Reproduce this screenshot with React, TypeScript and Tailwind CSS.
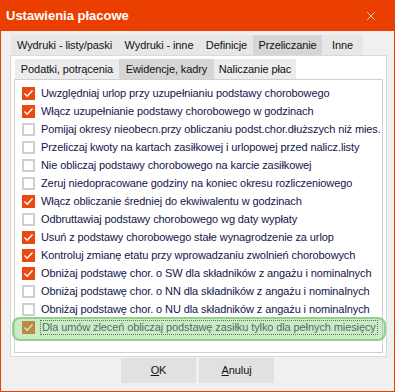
import { X } from "lucide-react"

const options = [
  { label: "Uwzględniaj urlop przy uzupełnianiu podstawy chorobowego", checked: true },
  { label: "Włącz uzupełnianie podstawy chorobowego w godzinach", checked: true },
  { label: "Pomijaj okresy nieobecn.przy obliczaniu podst.chor.dłuższych niż mies.", checked: false },
  { label: "Przeliczaj kwoty na kartach zasiłkowej i urlopowej przed nalicz.listy", checked: false },
  { label: "Nie obliczaj podstawy chorobowego na karcie zasiłkowej", checked: false },
  { label: "Zeruj niedopracowane godziny na koniec okresu rozliczeniowego", checked: false },
  { label: "Włącz obliczanie średniej do ekwiwalentu w godzinach", checked: true },
  { label: "Odbruttawiaj podstawy chorobowego wg daty wypłaty", checked: false },
  { label: "Usuń z podstawy chorobowego stałe wynagrodzenie za urlop", checked: true },
  { label: "Kontroluj zmianę etatu przy wprowadzaniu zwolnień chorobowych", checked: true },
  { label: "Obniżaj podstawę chor. o SW dla składników z angażu i nominalnych", checked: true },
  { label: "Obniżaj podstawę chor. o NN dla składników z angażu i nominalnych", checked: false },
  { label: "Obniżaj podstawę chor. o NU dla składników z angażu i nominalnych", checked: false },
]

const outerTabs = [
  { label: "Wydruki - listy/paski", w: "w-[107px]" },
  { label: "Wydruki - inne", w: "w-[82px]" },
  { label: "Definicje", w: "w-[53px]" },
  { label: "Przeliczanie", w: "w-[69px]", active: true },
  { label: "Inne", w: "w-[41px]" },
]

const innerTabs = [
  { label: "Podatki, potrącenia", w: "w-[104px]" },
  { label: "Ewidencje, kadry", w: "w-[95px]", active: true },
  { label: "Naliczanie płac", w: "w-[82px]" },
]

function CheckBox({ checked }: { checked: boolean }) {
  if (checked) {
    return (
      <span className="flex h-[13px] w-[13px] shrink-0 items-center justify-center bg-[#ea4a12]">
        <svg width="13" height="13" viewBox="0 0 13 13">
          <polyline points="2.5,6.5 5.2,9.2 10.5,3.5" fill="none" stroke="#ffffff" strokeWidth="1.4" />
        </svg>
      </span>
    )
  }
  return <span className="h-[13px] w-[13px] shrink-0 border-2 border-[#cfcfcf] bg-white" />
}

export default function App() {
  return (
    <div
      className="flex h-[392px] w-[395px] flex-col bg-[#f0f0f0] text-[11px] tracking-[-0.1px]"
      style={{ fontFamily: '"Liberation Sans", Arial, sans-serif' }}
    >
      {/* Title bar */}
      <div className="flex h-[31px] shrink-0 items-center justify-between bg-[#ea3f00] pl-[6px] pr-[17px]">
        <span className="text-[13px] font-bold tracking-normal text-white">Ustawienia płacowe</span>
        <X size={14} strokeWidth={1.2} className="text-white" />
      </div>

      <div className="flex flex-1 flex-col border-x border-b border-[#ea3f00] pl-[9px] pr-[7px]">
        {/* Outer tabs */}
        <div className="mt-[4px] flex h-[20px] pl-[1px]">
          {outerTabs.map((t) => (
            <div
              key={t.label}
              className={`${t.w} flex items-center justify-center whitespace-nowrap text-[#111] ${t.active ? "bg-[#d6d6d6]" : "bg-[#e7e7e7]"}`}
            >
              {t.label}
            </div>
          ))}
        </div>

        {/* Outer panel */}
        <div className="h-[302px] border border-[#d9d9d9] bg-white p-[3px]">
          {/* Inner tabs */}
          <div className="flex h-[20px] pl-[1px]">
            {innerTabs.map((t) => (
              <div
                key={t.label}
                className={`${t.w} flex items-center justify-center whitespace-nowrap text-[#111] ${t.active ? "bg-[#d6d6d6]" : "bg-[#ececec]"}`}
              >
                {t.label}
              </div>
            ))}
          </div>

          {/* Inner panel */}
          <div className="flex h-[274px] flex-col border border-[#d0d0d0] bg-white pl-[7px] pt-[4px]">
            {options.map((o) => (
              <div key={o.label} className="flex h-[18px] items-center gap-[6px] text-[#14144a]">
                <CheckBox checked={o.checked} />
                <span className="whitespace-nowrap">{o.label}</span>
              </div>
            ))}
            <div className="relative flex h-[18px] items-center gap-[5px] text-[#14144a]">
              <CheckBox checked />
              <span className="whitespace-nowrap border border-dotted border-[#333] px-[1px] leading-[13px]">
                Dla umów zleceń obliczaj podstawę zasiłku tylko dla pełnych miesięcy
              </span>
              {/* green highlight marker */}
              <div className="pointer-events-none absolute -left-[10px] -right-[4px] -top-[1px] -bottom-[5px] rounded-[8px] border-2 border-[#6ebe64]/60 bg-[#8cd282]/45" />
            </div>
          </div>
        </div>

        {/* Buttons */}
        <div className="mt-[1px] flex justify-center gap-[3px] pr-[2px]">
          <button className="h-[25px] w-[75px] bg-[#e1e1e1] text-[#111]">
            <span className="underline">O</span>K
          </button>
          <button className="h-[25px] w-[75px] bg-[#e1e1e1] text-[#111]">
            <span className="underline">A</span>nuluj
          </button>
        </div>
      </div>
    </div>
  )
}
